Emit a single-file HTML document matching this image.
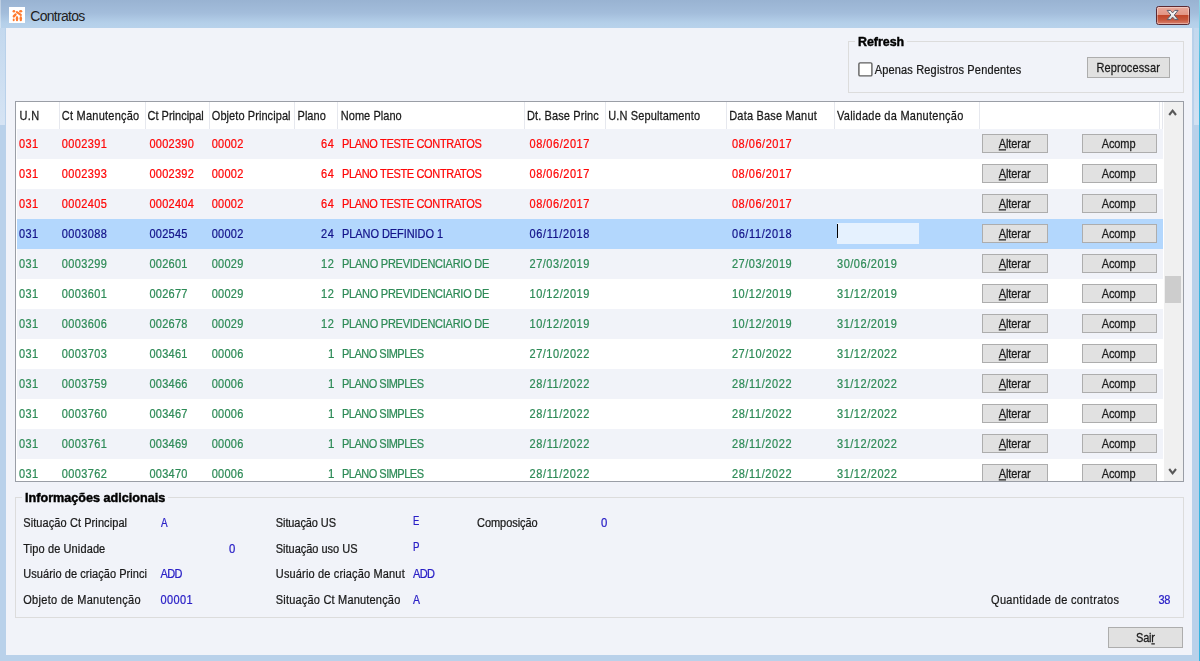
<!DOCTYPE html>
<html lang="pt-BR"><head><meta charset="utf-8"><title>Contratos</title>
<style>
*{box-sizing:border-box}
html,body{margin:0;padding:0}
body{width:1200px;height:661px;overflow:hidden;position:relative;background:#b9d1ea;font-family:'Liberation Sans',sans-serif;font-size:11px;color:#1a1a1a}
.abs{position:absolute}
.t{position:absolute;white-space:pre;line-height:14px;height:14px;-webkit-text-stroke:0.22px currentColor}
.b{font-weight:bold;-webkit-text-stroke:0.4px currentColor}
.btn{position:absolute;background:#e1e1e1;border:1px solid #adadad}
.row{position:absolute;left:17px;width:1146px;height:30px}
.g{background:#f1f3f9}.w{background:#fff}.s{background:#b3d7fd}
.sep{position:absolute;top:102px;width:1px;height:27px;background:#e6e8ee}
.gb{position:absolute;border:1px solid #dcdcdc}
u{text-decoration:underline}
</style></head><body>

<div class="abs" style="left:0;top:0;width:1200px;height:29px;background:linear-gradient(#99b3d2,#a3bddb 45%,#b4cfe9 78%,#b9d3ec)"></div>
<div class="abs" style="left:1199px;top:0;width:1px;height:661px;background:linear-gradient(#8fd6e6,#3cb6df 12%,#35b4e0)"></div>
<div class="abs" style="left:0;top:28px;width:5px;height:97px;background:linear-gradient(#c3d8ee,#d6e4f4)"></div>
<div class="abs" style="left:1194px;top:28px;width:5px;height:97px;background:linear-gradient(#c3d8ee,#d2e1f2)"></div>
<div class="abs" style="left:0;top:0;width:1px;height:28px;background:rgba(255,255,255,.35)"></div>
<div class="abs" style="left:6px;top:28px;width:1186px;height:627px;background:#f1f3f9"></div>
<div class="abs" style="left:9px;top:7px;width:16px;height:16px;background:#fff"></div>
<svg class="abs" style="left:9px;top:7px;filter:blur(0.3px)" width="16" height="17" viewBox="9 6.7 16 17"><g fill="#ff7a2e" stroke="none"><ellipse cx="13.9" cy="10.9" rx="1.35" ry="1.25"/><ellipse cx="20.7" cy="10.9" rx="1.6" ry="1.25"/><ellipse cx="17" cy="18.3" rx="1.3" ry="2.7"/><ellipse cx="20.8" cy="18.3" rx="1.3" ry="2.7"/><ellipse cx="13.7" cy="19.6" rx="1" ry="1.4"/></g><g stroke="#ff7a2e" stroke-linecap="round" fill="none"><path d="M16.9 11.8 L20.8 14.5" stroke-width="2.2"/><path d="M13.8 16.1 L15.5 14.2" stroke-width="2.4"/></g></svg>
<div class="abs" style="left:1156px;top:6px;width:34px;height:19px;border-radius:2.5px;border:1px solid #5c2a33;background:linear-gradient(#e9a99c,#e29584 45%,#c1462a 50%,#c6563b 75%,#d98270);box-shadow:inset 0 0 0 1px rgba(255,255,255,.35)"></div>
<svg class="abs" style="left:1165px;top:8px" width="16" height="14" viewBox="0 0 16 14"><defs><linearGradient id="xg" x1="0" y1="0" x2="0" y2="1"><stop offset="0" stop-color="#ffffff"/><stop offset="1" stop-color="#dcdcdc"/></linearGradient></defs><path transform="translate(2.1,2.4)" d="M0 0 L3.3 0 L5.5 2.5 L7.7 0 L11 0 L7.2 4.6 L11 9.2 L7.7 9.2 L5.5 6.7 L3.3 9.2 L0 9.2 L3.8 4.6 Z" fill="url(#xg)" stroke="#5d5f6e" stroke-width="1" stroke-linejoin="round"/></svg>
<div class="gb" style="left:848px;top:41px;width:336px;height:52px"></div>
<div class="abs" style="left:855px;top:36px;width:52px;height:12px;background:#f1f3f9"></div>
<svg class="abs" style="left:856px;top:60px" width="20" height="20" viewBox="856 60 20 20"><rect x="858.9" y="62.9" width="13" height="13" rx="1.2" fill="#fff" stroke="#5f5f5f" stroke-width="1.4"/></svg>
<div class="btn" style="left:1087px;top:57px;width:83px;height:21px"></div>
<div class="abs" style="left:15px;top:101px;width:1169px;height:381px;border:1px solid #9a9ea6;background:#fff"></div>
<div class="abs" style="left:1164px;top:102px;width:19px;height:379px;background:#f0f0f0"></div>
<div class="abs" style="left:1165px;top:276px;width:16px;height:27px;background:#cdcdcd"></div>
<svg class="abs" style="left:1163px;top:102px" width="20" height="20" viewBox="1163 102 20 20"><path d="M1169.2 115 L1172.6 110.7 L1176 115" stroke="#585858" stroke-width="2.1" fill="none" stroke-linejoin="miter"/></svg>
<svg class="abs" style="left:1163px;top:461px" width="20" height="20" viewBox="1163 461 20 20"><path d="M1169.2 469 L1172.6 473.3 L1176 469" stroke="#585858" stroke-width="2.1" fill="none" stroke-linejoin="miter"/></svg>
<div class="row g" style="top:129px;height:30px"></div>
<div class="btn" style="left:982px;top:134px;width:66px;height:19px"></div>
<div class="btn" style="left:1082px;top:134px;width:75px;height:19px"></div>
<div class="row w" style="top:159px;height:30px"></div>
<div class="btn" style="left:982px;top:164px;width:66px;height:19px"></div>
<div class="btn" style="left:1082px;top:164px;width:75px;height:19px"></div>
<div class="row g" style="top:189px;height:30px"></div>
<div class="btn" style="left:982px;top:194px;width:66px;height:19px"></div>
<div class="btn" style="left:1082px;top:194px;width:75px;height:19px"></div>
<div class="row s" style="top:219px;height:30px"></div>
<div class="btn" style="left:982px;top:224px;width:66px;height:19px"></div>
<div class="btn" style="left:1082px;top:224px;width:75px;height:19px"></div>
<div class="row g" style="top:249px;height:30px"></div>
<div class="btn" style="left:982px;top:254px;width:66px;height:19px"></div>
<div class="btn" style="left:1082px;top:254px;width:75px;height:19px"></div>
<div class="row w" style="top:279px;height:30px"></div>
<div class="btn" style="left:982px;top:284px;width:66px;height:19px"></div>
<div class="btn" style="left:1082px;top:284px;width:75px;height:19px"></div>
<div class="row g" style="top:309px;height:30px"></div>
<div class="btn" style="left:982px;top:314px;width:66px;height:19px"></div>
<div class="btn" style="left:1082px;top:314px;width:75px;height:19px"></div>
<div class="row w" style="top:339px;height:30px"></div>
<div class="btn" style="left:982px;top:344px;width:66px;height:19px"></div>
<div class="btn" style="left:1082px;top:344px;width:75px;height:19px"></div>
<div class="row g" style="top:369px;height:30px"></div>
<div class="btn" style="left:982px;top:374px;width:66px;height:19px"></div>
<div class="btn" style="left:1082px;top:374px;width:75px;height:19px"></div>
<div class="row w" style="top:399px;height:30px"></div>
<div class="btn" style="left:982px;top:404px;width:66px;height:19px"></div>
<div class="btn" style="left:1082px;top:404px;width:75px;height:19px"></div>
<div class="row g" style="top:429px;height:30px"></div>
<div class="btn" style="left:982px;top:434px;width:66px;height:19px"></div>
<div class="btn" style="left:1082px;top:434px;width:75px;height:19px"></div>
<div class="row w" style="top:459px;height:22px"></div>
<div class="btn" style="left:982px;top:464px;width:66px;height:17px;border-bottom:none"></div>
<div class="btn" style="left:1082px;top:464px;width:75px;height:17px;border-bottom:none"></div>
<div class="sep" style="left:59px"></div>
<div class="sep" style="left:145px"></div>
<div class="sep" style="left:209px"></div>
<div class="sep" style="left:294px"></div>
<div class="sep" style="left:337px"></div>
<div class="sep" style="left:524px"></div>
<div class="sep" style="left:605px"></div>
<div class="sep" style="left:726px"></div>
<div class="sep" style="left:834px"></div>
<div class="sep" style="left:979px"></div>
<div class="sep" style="left:1159px"></div>
<div class="sep" style="left:1162px"></div>
<div class="abs" style="left:837px;top:223px;width:82px;height:21px;background:#e5f1fe"></div>
<div class="abs" style="left:837px;top:224px;width:1px;height:14px;background:#000"></div>
<div class="gb" style="left:15px;top:497px;width:1169px;height:121px"></div>
<div class="abs" style="left:22px;top:491px;width:146px;height:14px;background:#f1f3f9"></div>
<div class="btn" style="left:1108px;top:627px;width:75px;height:21px"></div>
<div class="t" style="top:8.95px;color:#1e1e1e;left:30.30px;letter-spacing:-0.713px;font-size:14px;-webkit-text-stroke:0;">Contratos</div>
<div class="t b" style="top:35.32px;color:#000;left:858.00px;font-size:11.5px;transform-origin:0 10.98px;transform:scale(1.0787,1.1);">Refresh</div>
<div class="t" style="top:63.39px;color:#1a1a1a;left:874.70px;letter-spacing:0.165px;transform-origin:0 10.81px;transform:scaleY(1.11);">Apenas Registros Pendentes</div>
<div class="t" style="top:61.19px;color:#1a1a1a;left:1096.40px;letter-spacing:0.104px;transform-origin:0 10.81px;transform:scaleY(1.22);">Reprocessar</div>
<div class="t" style="top:109.39px;color:#1a1a1a;left:19.50px;letter-spacing:0.423px;transform-origin:0 10.81px;transform:scaleY(1.22);">U.N</div>
<div class="t" style="top:109.39px;color:#1a1a1a;left:61.75px;letter-spacing:0.241px;transform-origin:0 10.81px;transform:scaleY(1.22);">Ct Manutenção</div>
<div class="t" style="top:109.39px;color:#1a1a1a;left:147.50px;letter-spacing:0.005px;transform-origin:0 10.81px;transform:scaleY(1.22);">Ct Principal</div>
<div class="t" style="top:109.39px;color:#1a1a1a;left:211.75px;letter-spacing:0.076px;transform-origin:0 10.81px;transform:scaleY(1.22);">Objeto Principal</div>
<div class="t" style="top:109.39px;color:#1a1a1a;left:297.50px;letter-spacing:0.04px;transform-origin:0 10.81px;transform:scaleY(1.22);">Plano</div>
<div class="t" style="top:109.39px;color:#1a1a1a;left:340.75px;letter-spacing:0.05px;transform-origin:0 10.81px;transform:scaleY(1.22);">Nome Plano</div>
<div class="t" style="top:109.39px;color:#1a1a1a;left:527.00px;letter-spacing:0.114px;transform-origin:0 10.81px;transform:scaleY(1.22);">Dt. Base Princ</div>
<div class="t" style="top:109.39px;color:#1a1a1a;left:608.25px;letter-spacing:0.127px;transform-origin:0 10.81px;transform:scaleY(1.22);">U.N Sepultamento</div>
<div class="t" style="top:109.39px;color:#1a1a1a;left:729.25px;letter-spacing:0.179px;transform-origin:0 10.81px;transform:scaleY(1.22);">Data Base Manut</div>
<div class="t" style="top:109.39px;color:#1a1a1a;left:837.00px;letter-spacing:0.258px;transform-origin:0 10.81px;transform:scaleY(1.22);">Validade da Manutenção</div>
<div class="t" style="top:137.19px;color:#ff0808;left:19.00px;letter-spacing:0.32px;transform-origin:0 10.81px;transform:scaleY(1.11);">031</div>
<div class="t" style="top:137.19px;color:#ff0808;left:61.75px;letter-spacing:0.362px;transform-origin:0 10.81px;transform:scaleY(1.11);">0002391</div>
<div class="t" style="top:137.19px;color:#ff0808;left:149.50px;letter-spacing:0.245px;transform-origin:0 10.81px;transform:scaleY(1.11);">0002390</div>
<div class="t" style="top:137.19px;color:#ff0808;left:211.75px;letter-spacing:0.252px;transform-origin:0 10.81px;transform:scaleY(1.11);">00002</div>
<div class="t" style="top:137.19px;color:#ff0808;right:865.35px;letter-spacing:0.75px;transform-origin:0 10.81px;transform:scaleY(1.11);">64</div>
<div class="t" style="top:137.19px;color:#ff0808;left:342.00px;letter-spacing:-0.345px;transform-origin:0 10.81px;transform:scaleY(1.11);">PLANO TESTE CONTRATOS</div>
<div class="t" style="top:137.19px;color:#ff0808;left:529.50px;letter-spacing:0.526px;transform-origin:0 10.81px;transform:scaleY(1.11);">08/06/2017</div>
<div class="t" style="top:137.19px;color:#ff0808;left:731.90px;letter-spacing:0.526px;transform-origin:0 10.81px;transform:scaleY(1.11);">08/06/2017</div>
<div class="t" style="top:136.94px;color:#1a1a1a;left:998.75px;letter-spacing:-0.101px;transform-origin:0 10.81px;transform:scaleY(1.22);"><u>A</u>lterar</div>
<div class="t" style="top:136.94px;color:#1a1a1a;left:1101.75px;letter-spacing:-0.113px;transform-origin:0 10.81px;transform:scaleY(1.22);">Acomp</div>
<div class="t" style="top:167.19px;color:#ff0808;left:19.00px;letter-spacing:0.32px;transform-origin:0 10.81px;transform:scaleY(1.11);">031</div>
<div class="t" style="top:167.19px;color:#ff0808;left:61.75px;letter-spacing:0.362px;transform-origin:0 10.81px;transform:scaleY(1.11);">0002393</div>
<div class="t" style="top:167.19px;color:#ff0808;left:149.50px;letter-spacing:0.245px;transform-origin:0 10.81px;transform:scaleY(1.11);">0002392</div>
<div class="t" style="top:167.19px;color:#ff0808;left:211.75px;letter-spacing:0.252px;transform-origin:0 10.81px;transform:scaleY(1.11);">00002</div>
<div class="t" style="top:167.19px;color:#ff0808;right:865.35px;letter-spacing:0.75px;transform-origin:0 10.81px;transform:scaleY(1.11);">64</div>
<div class="t" style="top:167.19px;color:#ff0808;left:342.00px;letter-spacing:-0.345px;transform-origin:0 10.81px;transform:scaleY(1.11);">PLANO TESTE CONTRATOS</div>
<div class="t" style="top:167.19px;color:#ff0808;left:529.50px;letter-spacing:0.526px;transform-origin:0 10.81px;transform:scaleY(1.11);">08/06/2017</div>
<div class="t" style="top:167.19px;color:#ff0808;left:731.90px;letter-spacing:0.526px;transform-origin:0 10.81px;transform:scaleY(1.11);">08/06/2017</div>
<div class="t" style="top:166.94px;color:#1a1a1a;left:998.75px;letter-spacing:-0.101px;transform-origin:0 10.81px;transform:scaleY(1.22);"><u>A</u>lterar</div>
<div class="t" style="top:166.94px;color:#1a1a1a;left:1101.75px;letter-spacing:-0.113px;transform-origin:0 10.81px;transform:scaleY(1.22);">Acomp</div>
<div class="t" style="top:197.19px;color:#ff0808;left:19.00px;letter-spacing:0.32px;transform-origin:0 10.81px;transform:scaleY(1.11);">031</div>
<div class="t" style="top:197.19px;color:#ff0808;left:61.75px;letter-spacing:0.362px;transform-origin:0 10.81px;transform:scaleY(1.11);">0002405</div>
<div class="t" style="top:197.19px;color:#ff0808;left:149.50px;letter-spacing:0.245px;transform-origin:0 10.81px;transform:scaleY(1.11);">0002404</div>
<div class="t" style="top:197.19px;color:#ff0808;left:211.75px;letter-spacing:0.252px;transform-origin:0 10.81px;transform:scaleY(1.11);">00002</div>
<div class="t" style="top:197.19px;color:#ff0808;right:865.35px;letter-spacing:0.75px;transform-origin:0 10.81px;transform:scaleY(1.11);">64</div>
<div class="t" style="top:197.19px;color:#ff0808;left:342.00px;letter-spacing:-0.345px;transform-origin:0 10.81px;transform:scaleY(1.11);">PLANO TESTE CONTRATOS</div>
<div class="t" style="top:197.19px;color:#ff0808;left:529.50px;letter-spacing:0.526px;transform-origin:0 10.81px;transform:scaleY(1.11);">08/06/2017</div>
<div class="t" style="top:197.19px;color:#ff0808;left:731.90px;letter-spacing:0.526px;transform-origin:0 10.81px;transform:scaleY(1.11);">08/06/2017</div>
<div class="t" style="top:196.94px;color:#1a1a1a;left:998.75px;letter-spacing:-0.101px;transform-origin:0 10.81px;transform:scaleY(1.22);"><u>A</u>lterar</div>
<div class="t" style="top:196.94px;color:#1a1a1a;left:1101.75px;letter-spacing:-0.113px;transform-origin:0 10.81px;transform:scaleY(1.22);">Acomp</div>
<div class="t" style="top:227.19px;color:#14148a;left:19.00px;letter-spacing:0.32px;transform-origin:0 10.81px;transform:scaleY(1.11);">031</div>
<div class="t" style="top:227.19px;color:#14148a;left:61.75px;letter-spacing:0.362px;transform-origin:0 10.81px;transform:scaleY(1.11);">0003088</div>
<div class="t" style="top:227.19px;color:#14148a;left:149.50px;letter-spacing:0.256px;transform-origin:0 10.81px;transform:scaleY(1.11);">002545</div>
<div class="t" style="top:227.19px;color:#14148a;left:211.75px;letter-spacing:0.252px;transform-origin:0 10.81px;transform:scaleY(1.11);">00002</div>
<div class="t" style="top:227.19px;color:#14148a;right:865.35px;letter-spacing:0.75px;transform-origin:0 10.81px;transform:scaleY(1.11);">24</div>
<div class="t" style="top:227.19px;color:#14148a;left:342.00px;letter-spacing:-0.072px;transform-origin:0 10.81px;transform:scaleY(1.11);">PLANO DEFINIDO 1</div>
<div class="t" style="top:227.19px;color:#14148a;left:529.50px;letter-spacing:0.617px;transform-origin:0 10.81px;transform:scaleY(1.11);">06/11/2018</div>
<div class="t" style="top:227.19px;color:#14148a;left:731.90px;letter-spacing:0.617px;transform-origin:0 10.81px;transform:scaleY(1.11);">06/11/2018</div>
<div class="t" style="top:226.94px;color:#1a1a1a;left:998.75px;letter-spacing:-0.101px;transform-origin:0 10.81px;transform:scaleY(1.22);"><u>A</u>lterar</div>
<div class="t" style="top:226.94px;color:#1a1a1a;left:1101.75px;letter-spacing:-0.113px;transform-origin:0 10.81px;transform:scaleY(1.22);">Acomp</div>
<div class="t" style="top:257.19px;color:#2e8b57;left:19.00px;letter-spacing:0.32px;transform-origin:0 10.81px;transform:scaleY(1.11);">031</div>
<div class="t" style="top:257.19px;color:#2e8b57;left:61.75px;letter-spacing:0.362px;transform-origin:0 10.81px;transform:scaleY(1.11);">0003299</div>
<div class="t" style="top:257.19px;color:#2e8b57;left:149.50px;letter-spacing:0.256px;transform-origin:0 10.81px;transform:scaleY(1.11);">002601</div>
<div class="t" style="top:257.19px;color:#2e8b57;left:211.75px;letter-spacing:0.252px;transform-origin:0 10.81px;transform:scaleY(1.11);">00029</div>
<div class="t" style="top:257.19px;color:#2e8b57;right:865.35px;letter-spacing:0.75px;transform-origin:0 10.81px;transform:scaleY(1.11);">12</div>
<div class="t" style="top:257.19px;color:#2e8b57;left:342.00px;letter-spacing:-0.251px;transform-origin:0 10.81px;transform:scaleY(1.11);">PLANO PREVIDENCIARIO DE</div>
<div class="t" style="top:257.19px;color:#2e8b57;left:529.50px;letter-spacing:0.526px;transform-origin:0 10.81px;transform:scaleY(1.11);">27/03/2019</div>
<div class="t" style="top:257.19px;color:#2e8b57;left:731.90px;letter-spacing:0.526px;transform-origin:0 10.81px;transform:scaleY(1.11);">27/03/2019</div>
<div class="t" style="top:257.19px;color:#2e8b57;left:837.00px;letter-spacing:0.526px;transform-origin:0 10.81px;transform:scaleY(1.11);">30/06/2019</div>
<div class="t" style="top:256.94px;color:#1a1a1a;left:998.75px;letter-spacing:-0.101px;transform-origin:0 10.81px;transform:scaleY(1.22);"><u>A</u>lterar</div>
<div class="t" style="top:256.94px;color:#1a1a1a;left:1101.75px;letter-spacing:-0.113px;transform-origin:0 10.81px;transform:scaleY(1.22);">Acomp</div>
<div class="t" style="top:287.19px;color:#2e8b57;left:19.00px;letter-spacing:0.32px;transform-origin:0 10.81px;transform:scaleY(1.11);">031</div>
<div class="t" style="top:287.19px;color:#2e8b57;left:61.75px;letter-spacing:0.362px;transform-origin:0 10.81px;transform:scaleY(1.11);">0003601</div>
<div class="t" style="top:287.19px;color:#2e8b57;left:149.50px;letter-spacing:0.256px;transform-origin:0 10.81px;transform:scaleY(1.11);">002677</div>
<div class="t" style="top:287.19px;color:#2e8b57;left:211.75px;letter-spacing:0.252px;transform-origin:0 10.81px;transform:scaleY(1.11);">00029</div>
<div class="t" style="top:287.19px;color:#2e8b57;right:865.35px;letter-spacing:0.75px;transform-origin:0 10.81px;transform:scaleY(1.11);">12</div>
<div class="t" style="top:287.19px;color:#2e8b57;left:342.00px;letter-spacing:-0.251px;transform-origin:0 10.81px;transform:scaleY(1.11);">PLANO PREVIDENCIARIO DE</div>
<div class="t" style="top:287.19px;color:#2e8b57;left:529.50px;letter-spacing:0.526px;transform-origin:0 10.81px;transform:scaleY(1.11);">10/12/2019</div>
<div class="t" style="top:287.19px;color:#2e8b57;left:731.90px;letter-spacing:0.526px;transform-origin:0 10.81px;transform:scaleY(1.11);">10/12/2019</div>
<div class="t" style="top:287.19px;color:#2e8b57;left:837.00px;letter-spacing:0.526px;transform-origin:0 10.81px;transform:scaleY(1.11);">31/12/2019</div>
<div class="t" style="top:286.94px;color:#1a1a1a;left:998.75px;letter-spacing:-0.101px;transform-origin:0 10.81px;transform:scaleY(1.22);"><u>A</u>lterar</div>
<div class="t" style="top:286.94px;color:#1a1a1a;left:1101.75px;letter-spacing:-0.113px;transform-origin:0 10.81px;transform:scaleY(1.22);">Acomp</div>
<div class="t" style="top:317.19px;color:#2e8b57;left:19.00px;letter-spacing:0.32px;transform-origin:0 10.81px;transform:scaleY(1.11);">031</div>
<div class="t" style="top:317.19px;color:#2e8b57;left:61.75px;letter-spacing:0.362px;transform-origin:0 10.81px;transform:scaleY(1.11);">0003606</div>
<div class="t" style="top:317.19px;color:#2e8b57;left:149.50px;letter-spacing:0.256px;transform-origin:0 10.81px;transform:scaleY(1.11);">002678</div>
<div class="t" style="top:317.19px;color:#2e8b57;left:211.75px;letter-spacing:0.252px;transform-origin:0 10.81px;transform:scaleY(1.11);">00029</div>
<div class="t" style="top:317.19px;color:#2e8b57;right:865.35px;letter-spacing:0.75px;transform-origin:0 10.81px;transform:scaleY(1.11);">12</div>
<div class="t" style="top:317.19px;color:#2e8b57;left:342.00px;letter-spacing:-0.251px;transform-origin:0 10.81px;transform:scaleY(1.11);">PLANO PREVIDENCIARIO DE</div>
<div class="t" style="top:317.19px;color:#2e8b57;left:529.50px;letter-spacing:0.526px;transform-origin:0 10.81px;transform:scaleY(1.11);">10/12/2019</div>
<div class="t" style="top:317.19px;color:#2e8b57;left:731.90px;letter-spacing:0.526px;transform-origin:0 10.81px;transform:scaleY(1.11);">10/12/2019</div>
<div class="t" style="top:317.19px;color:#2e8b57;left:837.00px;letter-spacing:0.526px;transform-origin:0 10.81px;transform:scaleY(1.11);">31/12/2019</div>
<div class="t" style="top:316.94px;color:#1a1a1a;left:998.75px;letter-spacing:-0.101px;transform-origin:0 10.81px;transform:scaleY(1.22);"><u>A</u>lterar</div>
<div class="t" style="top:316.94px;color:#1a1a1a;left:1101.75px;letter-spacing:-0.113px;transform-origin:0 10.81px;transform:scaleY(1.22);">Acomp</div>
<div class="t" style="top:347.19px;color:#2e8b57;left:19.00px;letter-spacing:0.32px;transform-origin:0 10.81px;transform:scaleY(1.11);">031</div>
<div class="t" style="top:347.19px;color:#2e8b57;left:61.75px;letter-spacing:0.362px;transform-origin:0 10.81px;transform:scaleY(1.11);">0003703</div>
<div class="t" style="top:347.19px;color:#2e8b57;left:149.50px;letter-spacing:0.256px;transform-origin:0 10.81px;transform:scaleY(1.11);">003461</div>
<div class="t" style="top:347.19px;color:#2e8b57;left:211.75px;letter-spacing:0.252px;transform-origin:0 10.81px;transform:scaleY(1.11);">00006</div>
<div class="t" style="top:347.19px;color:#2e8b57;right:866.10px;transform-origin:0 10.81px;transform:scale(1.045,1.11);">1</div>
<div class="t" style="top:347.19px;color:#2e8b57;left:342.00px;letter-spacing:-0.504px;transform-origin:0 10.81px;transform:scaleY(1.11);">PLANO SIMPLES</div>
<div class="t" style="top:347.19px;color:#2e8b57;left:529.50px;letter-spacing:0.526px;transform-origin:0 10.81px;transform:scaleY(1.11);">27/10/2022</div>
<div class="t" style="top:347.19px;color:#2e8b57;left:731.90px;letter-spacing:0.526px;transform-origin:0 10.81px;transform:scaleY(1.11);">27/10/2022</div>
<div class="t" style="top:347.19px;color:#2e8b57;left:837.00px;letter-spacing:0.526px;transform-origin:0 10.81px;transform:scaleY(1.11);">31/12/2022</div>
<div class="t" style="top:346.94px;color:#1a1a1a;left:998.75px;letter-spacing:-0.101px;transform-origin:0 10.81px;transform:scaleY(1.22);"><u>A</u>lterar</div>
<div class="t" style="top:346.94px;color:#1a1a1a;left:1101.75px;letter-spacing:-0.113px;transform-origin:0 10.81px;transform:scaleY(1.22);">Acomp</div>
<div class="t" style="top:377.19px;color:#2e8b57;left:19.00px;letter-spacing:0.32px;transform-origin:0 10.81px;transform:scaleY(1.11);">031</div>
<div class="t" style="top:377.19px;color:#2e8b57;left:61.75px;letter-spacing:0.362px;transform-origin:0 10.81px;transform:scaleY(1.11);">0003759</div>
<div class="t" style="top:377.19px;color:#2e8b57;left:149.50px;letter-spacing:0.256px;transform-origin:0 10.81px;transform:scaleY(1.11);">003466</div>
<div class="t" style="top:377.19px;color:#2e8b57;left:211.75px;letter-spacing:0.252px;transform-origin:0 10.81px;transform:scaleY(1.11);">00006</div>
<div class="t" style="top:377.19px;color:#2e8b57;right:866.10px;transform-origin:0 10.81px;transform:scale(1.045,1.11);">1</div>
<div class="t" style="top:377.19px;color:#2e8b57;left:342.00px;letter-spacing:-0.504px;transform-origin:0 10.81px;transform:scaleY(1.11);">PLANO SIMPLES</div>
<div class="t" style="top:377.19px;color:#2e8b57;left:529.50px;letter-spacing:0.617px;transform-origin:0 10.81px;transform:scaleY(1.11);">28/11/2022</div>
<div class="t" style="top:377.19px;color:#2e8b57;left:731.90px;letter-spacing:0.617px;transform-origin:0 10.81px;transform:scaleY(1.11);">28/11/2022</div>
<div class="t" style="top:377.19px;color:#2e8b57;left:837.00px;letter-spacing:0.526px;transform-origin:0 10.81px;transform:scaleY(1.11);">31/12/2022</div>
<div class="t" style="top:376.94px;color:#1a1a1a;left:998.75px;letter-spacing:-0.101px;transform-origin:0 10.81px;transform:scaleY(1.22);"><u>A</u>lterar</div>
<div class="t" style="top:376.94px;color:#1a1a1a;left:1101.75px;letter-spacing:-0.113px;transform-origin:0 10.81px;transform:scaleY(1.22);">Acomp</div>
<div class="t" style="top:407.19px;color:#2e8b57;left:19.00px;letter-spacing:0.32px;transform-origin:0 10.81px;transform:scaleY(1.11);">031</div>
<div class="t" style="top:407.19px;color:#2e8b57;left:61.75px;letter-spacing:0.362px;transform-origin:0 10.81px;transform:scaleY(1.11);">0003760</div>
<div class="t" style="top:407.19px;color:#2e8b57;left:149.50px;letter-spacing:0.256px;transform-origin:0 10.81px;transform:scaleY(1.11);">003467</div>
<div class="t" style="top:407.19px;color:#2e8b57;left:211.75px;letter-spacing:0.252px;transform-origin:0 10.81px;transform:scaleY(1.11);">00006</div>
<div class="t" style="top:407.19px;color:#2e8b57;right:866.10px;transform-origin:0 10.81px;transform:scale(1.045,1.11);">1</div>
<div class="t" style="top:407.19px;color:#2e8b57;left:342.00px;letter-spacing:-0.504px;transform-origin:0 10.81px;transform:scaleY(1.11);">PLANO SIMPLES</div>
<div class="t" style="top:407.19px;color:#2e8b57;left:529.50px;letter-spacing:0.617px;transform-origin:0 10.81px;transform:scaleY(1.11);">28/11/2022</div>
<div class="t" style="top:407.19px;color:#2e8b57;left:731.90px;letter-spacing:0.617px;transform-origin:0 10.81px;transform:scaleY(1.11);">28/11/2022</div>
<div class="t" style="top:407.19px;color:#2e8b57;left:837.00px;letter-spacing:0.526px;transform-origin:0 10.81px;transform:scaleY(1.11);">31/12/2022</div>
<div class="t" style="top:406.94px;color:#1a1a1a;left:998.75px;letter-spacing:-0.101px;transform-origin:0 10.81px;transform:scaleY(1.22);"><u>A</u>lterar</div>
<div class="t" style="top:406.94px;color:#1a1a1a;left:1101.75px;letter-spacing:-0.113px;transform-origin:0 10.81px;transform:scaleY(1.22);">Acomp</div>
<div class="t" style="top:437.19px;color:#2e8b57;left:19.00px;letter-spacing:0.32px;transform-origin:0 10.81px;transform:scaleY(1.11);">031</div>
<div class="t" style="top:437.19px;color:#2e8b57;left:61.75px;letter-spacing:0.362px;transform-origin:0 10.81px;transform:scaleY(1.11);">0003761</div>
<div class="t" style="top:437.19px;color:#2e8b57;left:149.50px;letter-spacing:0.256px;transform-origin:0 10.81px;transform:scaleY(1.11);">003469</div>
<div class="t" style="top:437.19px;color:#2e8b57;left:211.75px;letter-spacing:0.252px;transform-origin:0 10.81px;transform:scaleY(1.11);">00006</div>
<div class="t" style="top:437.19px;color:#2e8b57;right:866.10px;transform-origin:0 10.81px;transform:scale(1.045,1.11);">1</div>
<div class="t" style="top:437.19px;color:#2e8b57;left:342.00px;letter-spacing:-0.504px;transform-origin:0 10.81px;transform:scaleY(1.11);">PLANO SIMPLES</div>
<div class="t" style="top:437.19px;color:#2e8b57;left:529.50px;letter-spacing:0.617px;transform-origin:0 10.81px;transform:scaleY(1.11);">28/11/2022</div>
<div class="t" style="top:437.19px;color:#2e8b57;left:731.90px;letter-spacing:0.617px;transform-origin:0 10.81px;transform:scaleY(1.11);">28/11/2022</div>
<div class="t" style="top:437.19px;color:#2e8b57;left:837.00px;letter-spacing:0.526px;transform-origin:0 10.81px;transform:scaleY(1.11);">31/12/2022</div>
<div class="t" style="top:436.94px;color:#1a1a1a;left:998.75px;letter-spacing:-0.101px;transform-origin:0 10.81px;transform:scaleY(1.22);"><u>A</u>lterar</div>
<div class="t" style="top:436.94px;color:#1a1a1a;left:1101.75px;letter-spacing:-0.113px;transform-origin:0 10.81px;transform:scaleY(1.22);">Acomp</div>
<div class="t" style="top:467.19px;color:#2e8b57;left:19.00px;letter-spacing:0.32px;transform-origin:0 10.81px;transform:scaleY(1.11);">031</div>
<div class="t" style="top:467.19px;color:#2e8b57;left:61.75px;letter-spacing:0.362px;transform-origin:0 10.81px;transform:scaleY(1.11);">0003762</div>
<div class="t" style="top:467.19px;color:#2e8b57;left:149.50px;letter-spacing:0.256px;transform-origin:0 10.81px;transform:scaleY(1.11);">003470</div>
<div class="t" style="top:467.19px;color:#2e8b57;left:211.75px;letter-spacing:0.252px;transform-origin:0 10.81px;transform:scaleY(1.11);">00006</div>
<div class="t" style="top:467.19px;color:#2e8b57;right:866.10px;transform-origin:0 10.81px;transform:scale(1.045,1.11);">1</div>
<div class="t" style="top:467.19px;color:#2e8b57;left:342.00px;letter-spacing:-0.504px;transform-origin:0 10.81px;transform:scaleY(1.11);">PLANO SIMPLES</div>
<div class="t" style="top:467.19px;color:#2e8b57;left:529.50px;letter-spacing:0.617px;transform-origin:0 10.81px;transform:scaleY(1.11);">28/11/2022</div>
<div class="t" style="top:467.19px;color:#2e8b57;left:731.90px;letter-spacing:0.617px;transform-origin:0 10.81px;transform:scaleY(1.11);">28/11/2022</div>
<div class="t" style="top:467.19px;color:#2e8b57;left:837.00px;letter-spacing:0.526px;transform-origin:0 10.81px;transform:scaleY(1.11);">31/12/2022</div>
<div class="t" style="top:466.94px;color:#1a1a1a;left:998.75px;letter-spacing:-0.101px;transform-origin:0 10.81px;transform:scaleY(1.22);"><u>A</u>lterar</div>
<div class="t" style="top:466.94px;color:#1a1a1a;left:1101.75px;letter-spacing:-0.113px;transform-origin:0 10.81px;transform:scaleY(1.22);">Acomp</div>
<div class="t b" style="top:491.42px;color:#000;left:25.00px;font-size:11.5px;transform-origin:0 10.98px;transform:scale(1.0976,1.1);">Informações adicionais</div>
<div class="t" style="top:516.19px;color:#1a1a1a;left:23.25px;letter-spacing:0.085px;transform-origin:0 10.81px;transform:scaleY(1.11);">Situação Ct Principal</div>
<div class="t" style="top:516.19px;color:#2a20c6;left:160.50px;transform-origin:0 10.81px;transform:scale(0.899,1.11);">A</div>
<div class="t" style="top:541.89px;color:#1a1a1a;left:23.25px;letter-spacing:0.119px;transform-origin:0 10.81px;transform:scaleY(1.11);">Tipo de Unidade</div>
<div class="t" style="top:541.89px;color:#2a20c6;left:228.75px;transform-origin:0 10.81px;transform:scale(1.029,1.11);">0</div>
<div class="t" style="top:567.49px;color:#1a1a1a;left:23.25px;letter-spacing:0.063px;transform-origin:0 10.81px;transform:scaleY(1.11);">Usuário de criação Princi</div>
<div class="t" style="top:567.49px;color:#2a20c6;left:160.50px;letter-spacing:-0.617px;transform-origin:0 10.81px;transform:scaleY(1.11);">ADD</div>
<div class="t" style="top:593.39px;color:#1a1a1a;left:23.25px;letter-spacing:0.315px;transform-origin:0 10.81px;transform:scaleY(1.11);">Objeto de Manutenção</div>
<div class="t" style="top:593.39px;color:#2a20c6;left:160.50px;letter-spacing:0.352px;transform-origin:0 10.81px;transform:scaleY(1.11);">00001</div>
<div class="t" style="top:516.19px;color:#1a1a1a;left:275.80px;letter-spacing:-0.096px;transform-origin:0 10.81px;transform:scaleY(1.11);">Situação US</div>
<div class="t" style="top:514.19px;color:#2a20c6;left:413.00px;transform-origin:0 10.81px;transform:scale(0.858,1.11);">E</div>
<div class="t" style="top:516.19px;color:#1a1a1a;left:477.00px;letter-spacing:-0.049px;transform-origin:0 10.81px;transform:scaleY(1.11);">Composição</div>
<div class="t" style="top:516.19px;color:#2a20c6;left:601.00px;transform-origin:0 10.81px;transform:scale(1.029,1.11);">0</div>
<div class="t" style="top:541.89px;color:#1a1a1a;left:275.80px;letter-spacing:-0.017px;transform-origin:0 10.81px;transform:scaleY(1.11);">Situação uso US</div>
<div class="t" style="top:539.69px;color:#2a20c6;left:413.00px;transform-origin:0 10.81px;transform:scale(0.885,1.11);">P</div>
<div class="t" style="top:567.49px;color:#1a1a1a;left:275.80px;letter-spacing:0.155px;transform-origin:0 10.81px;transform:scaleY(1.11);">Usuário de criação Manut</div>
<div class="t" style="top:567.49px;color:#2a20c6;left:413.00px;letter-spacing:-0.617px;transform-origin:0 10.81px;transform:scaleY(1.11);">ADD</div>
<div class="t" style="top:593.39px;color:#1a1a1a;left:275.80px;letter-spacing:0.192px;transform-origin:0 10.81px;transform:scaleY(1.11);">Situação Ct Manutenção</div>
<div class="t" style="top:593.39px;color:#2a20c6;left:413.00px;transform-origin:0 10.81px;transform:scale(0.953,1.11);">A</div>
<div class="t" style="top:593.19px;color:#1a1a1a;left:991.00px;letter-spacing:0.342px;transform-origin:0 10.81px;transform:scaleY(1.11);">Quantidade de contratos</div>
<div class="t" style="top:593.19px;color:#2a20c6;left:1158.40px;letter-spacing:-0.25px;transform-origin:0 10.81px;transform:scaleY(1.11);">38</div>
<div class="t" style="top:630.69px;color:#1a1a1a;left:1136.00px;letter-spacing:-0.188px;transform-origin:0 10.81px;transform:scaleY(1.22);">Sai<u>r</u></div>
</body></html>
